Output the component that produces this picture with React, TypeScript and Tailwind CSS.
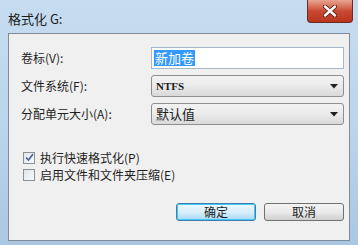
import React from "react";

const font = { fontFamily: '"Noto Sans CJK SC", "Liberation Sans", sans-serif' };

function Select({ value, mono }: { value: string; mono?: boolean }) {
  return (
    <div className="flex h-[22px] w-[193px] items-center justify-between rounded-[3px] border border-[#8e8f8f] bg-gradient-to-b from-[#f2f2f2] via-[#ebebeb] to-[#d9d9d9] pl-[4px] pr-[5px]">
      <span
        className={mono ? "text-[11px] font-bold text-[#1a1a1a]" : "text-[13px] text-[#1a1a1a]"}
        style={mono ? { fontFamily: '"Liberation Serif", serif' } : undefined}
      >
        {value}
      </span>
      <svg width="8" height="5" viewBox="0 0 8 5">
        <path d="M0 0 L8 0 L4 4.5 Z" fill="#202020" />
      </svg>
    </div>
  );
}

function Check({ checked, label }: { checked?: boolean; label: string }) {
  return (
    <div className="flex h-[17px] items-center gap-[5px]">
      <div className="flex h-[12px] w-[12px] items-center justify-center border border-[#8f8f8f] bg-gradient-to-br from-[#e0e6ec] to-[#f8fbfd]">
        {checked && (
          <svg width="9" height="9" viewBox="0 0 9 9">
            <path d="M1 4.5 L3.5 7 L8 1" stroke="#4a5f97" strokeWidth="1.6" fill="none" />
          </svg>
        )}
      </div>
      <span className="text-[12px] leading-[17px] text-[#1e1e1e]">{label}</span>
    </div>
  );
}

export default function App() {
  return (
    <div
      className="relative flex h-[245px] w-[358px] flex-col overflow-hidden bg-gradient-to-b from-[#c6dcf0] via-[#bcd5ec] to-[#a9c6e3]"
      style={font}
    >
      <div className="flex h-[33px] items-center pl-[8px] pt-[4px]">
        <span className="text-[13px] text-[#1b1b1b]">格式化 G:</span>
      </div>
      <div className="absolute right-[5px] top-0 flex h-[23px] w-[46px] items-center justify-center rounded-b-[4px] border border-t-0 border-[#6b2a24] bg-gradient-to-b from-[#e8a493] via-[#c94a32] to-[#b8341d]">
        <svg width="14" height="12" viewBox="0 0 14 12">
          <path d="M2 1.5 L12 10.5 M12 1.5 L2 10.5" stroke="#5a1a10" strokeWidth="4.2" strokeLinecap="round" />
          <path d="M2 1.5 L12 10.5 M12 1.5 L2 10.5" stroke="#ffffff" strokeWidth="2.4" strokeLinecap="round" />
        </svg>
      </div>
      <div className="mx-[8px] mb-[4px] flex flex-1 flex-col border border-[#7d8a99] bg-[#f0f0f0] pl-[12px] pr-[5px]">
        <div className="mt-[13px] flex flex-col gap-[6px]">
          <div className="flex items-center justify-between">
            <span className="text-[12px] text-[#1e1e1e]">卷标(V):</span>
            <div className="flex h-[22px] w-[193px] items-center border border-[#a9b8c9] bg-white pl-[2px]">
              <span className="bg-[#3399ff] px-[1px] text-[13px] leading-[16px] text-white">新加卷</span>
            </div>
          </div>
          <div className="flex items-center justify-between">
            <span className="text-[12px] text-[#1e1e1e]">文件系统(F):</span>
            <Select value="NTFS" mono />
          </div>
          <div className="flex items-center justify-between">
            <span className="text-[12px] text-[#1e1e1e]">分配单元大小(A):</span>
            <Select value="默认值" />
          </div>
        </div>
        <div className="mt-[24px] flex flex-col pl-[2px]">
          <Check checked label="执行快速格式化(P)" />
          <Check label="启用文件和文件夹压缩(E)" />
        </div>
        <div className="mt-[20px] flex justify-end gap-[8px]">
          <div className="flex h-[18px] w-[80px] items-center justify-center rounded-[3px] border border-[#3c7fb1] bg-gradient-to-b from-[#eaf6fd] via-[#d9f0fc] to-[#a7d9f5] text-[12px] text-[#1e1e1e] shadow-[inset_0_0_0_1px_#48c6f4]">
            确定
          </div>
          <div className="flex h-[18px] w-[80px] items-center justify-center rounded-[3px] border border-[#707070] bg-gradient-to-b from-[#f2f2f2] via-[#ebebeb] to-[#cfcfcf] text-[12px] text-[#1e1e1e]">
            取消
          </div>
        </div>
      </div>
    </div>
  );
}
